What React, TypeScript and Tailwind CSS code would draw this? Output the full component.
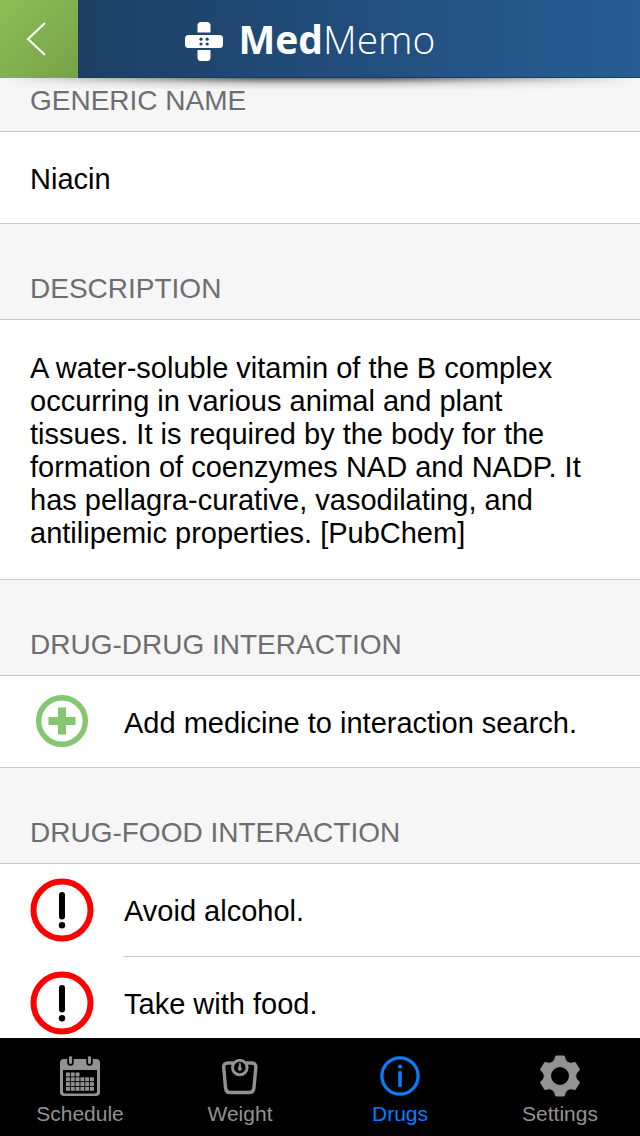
import React from 'react';

type TabId = 'schedule' | 'weight' | 'drugs' | 'settings';

const BandageLogo = () => (
    <svg viewBox="0 0 38 40" className="w-[38px] h-10" aria-hidden="true">
        <path fill="#fff" d="M12.5 11.5V4.5Q12.5 1 16 1H22Q25.500 1 25.500 4.500V11.500ZM12.500 29H25.500V36.500Q25.500 40 22 40H16Q12.500 40 12.500 36.500Z" />
        <rect x="0" y="14" width="38" height="13" rx="3.500" fill="#fff" />
        <g fill="#1e446d">
            <circle cx="16" cy="18.200" r="1.600" />
            <circle cx="22.200" cy="18.200" r="1.600" />
            <circle cx="16" cy="23" r="1.600" />
            <circle cx="22.200" cy="23" r="1.600" />
        </g>
    </svg>
);

const BackIcon = () => (
    <svg viewBox="0 0 20 34" className="w-5 h-[34px]" fill="none" stroke="#fff" strokeWidth="2" aria-hidden="true">
        <path d="M19 1L2 17L19 33" />
    </svg>
);

const AddIcon = () => (
    <svg viewBox="0 0 52 52" className="w-[52px] h-[52px]" fill="none" stroke="#85c670" aria-hidden="true">
        <circle cx="26" cy="26" r="23.300" strokeWidth="5.400" />
        <path d="M26 12.500V39.500M12.500 26H39.500" strokeWidth="8" />
    </svg>
);

const AlertIcon = () => (
    <svg viewBox="0 0 64 64" className="w-16 h-16" fill="none" aria-hidden="true">
        <circle cx="32" cy="32" r="28.500" stroke="#fe0000" strokeWidth="6" />
        <path d="M32 17V38.500" stroke="#000" strokeWidth="6" strokeLinecap="round" />
        <circle cx="32" cy="47.300" r="3.200" fill="#000" />
    </svg>
);

// Days shown on the calendar icon: [row, first column, last column]
const CALENDAR_ROWS = [
    [0, 0, 2],
    [1, 0, 5],
    [2, 0, 5],
    [3, 0, 5],
];

const ScheduleIcon = () => (
    <svg viewBox="0 0 40 42" className="w-10 h-[42px]" aria-hidden="true">
        <path
            fill="currentColor"
            fillRule="evenodd"
            d="M4 4H36Q40 4 40 8V37Q40 41 36 41H4Q0 41 0 37V8Q0 4 4 4ZM3 15V36.500Q3 38.500 5 38.500H35Q37 38.500 37 36.500V15Z"
        />
        <g strokeLinecap="round">
            <path d="M10.500 2.500V7.500M29.500 2.500V7.500" stroke="#000" strokeWidth="6.500" />
            <path d="M10.500 2.500V7.500M29.500 2.500V7.500" stroke="currentColor" strokeWidth="3" />
        </g>
        {CALENDAR_ROWS.map(([row, from, to]) =>
            Array.from({ length: to - from + 1 }, (_, i) => (
                <rect key={`${row}-${i}`} x={6 + (from + i) * 4.8} y={17.5 + row * 4.8} width="3.900" height="3.900" fill="currentColor" />
            ))
        )}
    </svg>
);

const WeightIcon = () => (
    <svg viewBox="0 0 40 42" className="w-10 h-[42px]" fill="none" stroke="currentColor" strokeWidth="3.400" aria-hidden="true">
        <path d="M13 8H8Q3.300 8 3.700 12.500L5.500 32.500Q6 37.500 10 37.500H29.500Q33.500 37.500 34 32.500L35.800 12.500Q36.200 8 31.500 8H26.500" strokeLinejoin="round" />
        <circle cx="19.800" cy="12.500" r="7.300" strokeWidth="3" />
        <path d="M19.800 8L20.800 12.500A1.600 1.600 0 1 1 18.800 12.500Z" fill="currentColor" strokeWidth="1" />
    </svg>
);

const DrugsIcon = () => (
    <svg viewBox="0 0 40 42" className="w-10 h-[42px]" fill="none" stroke="currentColor" aria-hidden="true">
        <circle cx="20" cy="21" r="18.100" strokeWidth="3.200" />
        <path d="M20 17.500V30.500" strokeWidth="3.600" strokeLinecap="round" />
        <circle cx="20" cy="11.500" r="2.100" fill="currentColor" stroke="none" />
    </svg>
);

const SettingsIcon = () => (
    <svg viewBox="-20 -21 40 42" className="w-10 h-[42px]" fill="currentColor" aria-hidden="true">
        <circle r="12.400" fill="none" stroke="currentColor" strokeWidth="6.800" />
        {[0, 60, 120, 180, 240, 300].map(angle => (
            <path key={angle} transform={`rotate(${angle})`} d="M-3.600 -20.500H3.600Q4.800 -20.500 5 -19.300Q5.400 -15.500 8 -14L5 -11H-5L-8 -14Q-5.400 -15.500 -5 -19.300Q-4.800 -20.500 -3.600 -20.500Z" />
        ))}
    </svg>
);

const TABS: { id: TabId; label: string; Icon: React.FC }[] = [
    { id: 'schedule', label: 'Schedule', Icon: ScheduleIcon },
    { id: 'weight', label: 'Weight', Icon: WeightIcon },
    { id: 'drugs', label: 'Drugs', Icon: DrugsIcon },
    { id: 'settings', label: 'Settings', Icon: SettingsIcon },
];

const FOOD_INTERACTIONS = ['Avoid alcohol.', 'Take with food.'];

const SectionTitle: React.FC<{ children: React.ReactNode; compact?: boolean }> = ({ children, compact }) => (
    <h2 className={`flex items-end px-[30px] pb-3 bg-[#f6f6f6] border-b border-[#c8c7cc] text-[28px] text-[#6d6d72] leading-9 ${compact ? 'h-[54px]' : 'h-24'}`}>
        {children}
    </h2>
);

export default function App() {
    const [activeTab, setActiveTab] = React.useState<TabId>('drugs');

    return (
        <div className="flex flex-col h-screen bg-[#f6f6f6] font-['Liberation_Sans',Arial,sans-serif] text-[29px] text-black">
            <header className="relative z-10 flex flex-shrink-0 h-[78px] bg-linear-to-r from-[#1b3a5b] via-[#214c7a] to-[#275d93]">
                <button className="flex items-center w-[78px] pl-[26px] bg-linear-to-br from-[#8fbe57] to-[#77a248]" aria-label="Back">
                    <BackIcon />
                </button>
                <div className="flex flex-1 items-center justify-center gap-4 pt-1 pr-[98px] border-b border-[#173c64] text-white">
                    <BandageLogo />
                    <h1 className="pb-1 font-['Open_Sans',sans-serif] text-[39px] leading-[54px]">
                        <span className="font-bold">Med</span>
                        <span className="font-light">Memo</span>
                    </h1>
                </div>
                <div className="absolute inset-x-0 top-full h-3 bg-linear-to-b from-black/60 via-black/15 to-transparent [mask-image:linear-gradient(to_right,transparent,black_40%,black_60%,transparent)]" />
            </header>

            <main className="flex-1 min-h-0 overflow-y-auto [scrollbar-width:none]">
                <section>
                    <SectionTitle compact>GENERIC NAME</SectionTitle>
                    <p className="flex items-center h-[92px] px-[30px] pt-1 bg-white border-b border-[#c8c7cc]">Niacin</p>
                </section>

                <section>
                    <SectionTitle>DESCRIPTION</SectionTitle>
                    <p className="pl-[30px] pr-12 pt-8 pb-[29px] bg-white border-b border-[#c8c7cc] leading-[33px]">
                        A water-soluble vitamin of the B complex occurring in various animal and plant tissues. It is required by the body for the formation of coenzymes NAD and NADP. It has pellagra-curative, vasodilating, and antilipemic properties. [PubChem]
                    </p>
                </section>

                <section>
                    <SectionTitle>DRUG-DRUG INTERACTION</SectionTitle>
                    <button className="flex items-center w-full h-[92px] bg-white border-b border-[#c8c7cc] text-left">
                        <span className="flex justify-center w-[124px] pb-0.5">
                            <AddIcon />
                        </span>
                        <span className="pt-1">Add medicine to interaction search.</span>
                    </button>
                </section>

                <section>
                    <SectionTitle>DRUG-FOOD INTERACTION</SectionTitle>
                    <ul className="bg-white">
                        {FOOD_INTERACTIONS.map(text => (
                            <li key={text} className="flex h-[93px]">
                                <span className="flex flex-shrink-0 items-center justify-center w-[124px] pb-0.5">
                                    <AlertIcon />
                                </span>
                                <span className="flex flex-1 items-center pt-1 border-b border-[#c8c7cc]">{text}</span>
                            </li>
                        ))}
                    </ul>
                </section>
            </main>

            <nav className="grid grid-cols-4 flex-shrink-0 h-[98px] bg-black text-[21px]">
                {TABS.map(({ id, label, Icon }) => (
                    <button
                        key={id}
                        onClick={() => setActiveTab(id)}
                        aria-current={activeTab === id ? 'page' : undefined}
                        className={`flex flex-col items-center gap-[5px] pt-[17px] ${activeTab === id ? 'text-[#087dff]' : 'text-[#929292]'}`}
                    >
                        <Icon />
                        <span className="leading-6">{label}</span>
                    </button>
                ))}
            </nav>
        </div>
    );
}
